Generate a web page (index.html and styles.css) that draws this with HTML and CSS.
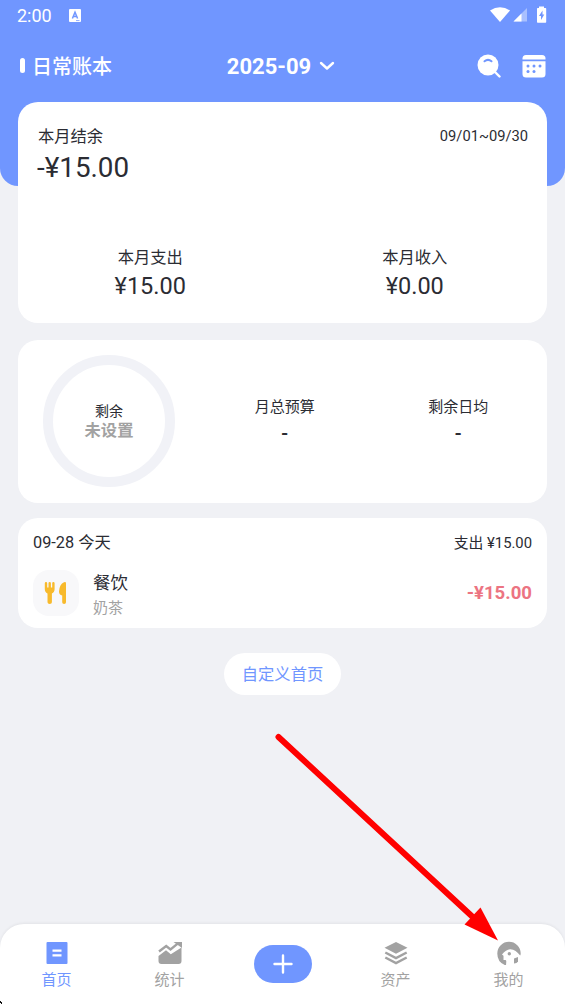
FILE: index.html
```html
<!DOCTYPE html>
<html lang="zh-CN">
<head>
<meta charset="utf-8">
<title>日常账本</title>
<link rel="stylesheet" href="styles.css">
</head>
<body>
<div class="app">
  <header class="hero">
    <div class="status">
      <span class="clock">2:00</span>
      <svg class="status-app" width="12" height="13" viewBox="0 0 12 13"><rect width="12" height="13" rx="1" fill="#fff"/><path d="M3.400 9.500 6 3.300 8.600 9.500M4.300 7.500h3.400" fill="none" stroke="#7096ff" stroke-width="1.500"/><path d="M7 11.600h3.500" stroke="#7096ff" stroke-width=".8"/></svg>
      <svg class="status-icons" width="57" height="18" viewBox="0 0 57 18">
        <path d="M0 4.500Q10 -2 20 4.500L10 16Z" fill="#fff"/>
        <path d="M23.500 15.500 37 2v13.500Z" fill="#fff" opacity=".4"/>
        <path d="M23.500 15.500 31.500 7.500v8Z" fill="#fff"/>
        <path d="M49 .5h5V2h1.500q.7 0 .7.700V16q0 .7-.7.700h-7.800q-.7 0-.7-.7V2.700q0-.7.700-.7H49Z" fill="#fff"/>
        <path d="M52.500 4.500 49 10h2v4l3.300-5.500h-1.800Z" fill="#7096ff"/>
      </svg>
    </div>
    <div class="toolbar">
      <div class="book"><i class="book-mark"></i>日常账本</div>
      <div class="month">2025-09<svg width="16" height="10" viewBox="0 0 16 10"><path d="M2 2l6 5.500 6-5.500" fill="none" stroke="#fff" stroke-width="2.400" stroke-linecap="round" stroke-linejoin="round"/></svg></div>
      <div class="actions">
        <svg width="24" height="24" viewBox="0 0 24 24"><circle cx="11" cy="11" r="10.500" fill="#fff"/><path d="M18.500 18.500l4 4" stroke="#fff" stroke-width="2.400" stroke-linecap="round"/><path d="M7.500 7.300q3.500-2.800 7 0" fill="none" stroke="#7096ff" stroke-width="2" stroke-linecap="round"/></svg>
        <svg width="24" height="24" viewBox="0 0 24 24"><path d="M.5 5.500V4.500Q.5 1 4 1h16q3.500 0 3.500 3.500v1Z" fill="#fff"/><path d="M.5 7.200h23V20q0 3.500-3.500 3.500H4Q.5 23.500.5 20Z" fill="#fff"/><g fill="#7096ff"><circle cx="6" cy="12" r="1.500"/><circle cx="12" cy="12" r="1.500"/><circle cx="18" cy="12" r="1.500"/><circle cx="6" cy="17.500" r="1.500"/><circle cx="12" cy="17.500" r="1.500"/></g></svg>
      </div>
    </div>
  </header>

  <main class="content">
    <section class="card balance">
      <div class="balance-head"><span class="label">本月结余</span><span class="range">09/01~09/30</span></div>
      <div class="balance-total">-¥15.00</div>
      <div class="balance-stats">
        <div class="stat"><span class="label">本月支出</span><span class="stat-value">¥15.00</span></div>
        <div class="stat"><span class="label">本月收入</span><span class="stat-value">¥0.00</span></div>
      </div>
    </section>

    <section class="card budget">
      <div class="ring"><span class="ring-label">剩余</span><span class="ring-value">未设置</span></div>
      <div class="budget-cols">
        <div class="budget-col"><span>月总预算</span><b>-</b></div>
        <div class="budget-col"><span>剩余日均</span><b>-</b></div>
      </div>
    </section>

    <section class="card records">
      <div class="day"><span class="day-date">09-28 今天</span><span class="day-sum">支出 ¥15.00</span></div>
      <div class="record">
        <div class="record-icon">
          <svg width="24" height="24" viewBox="0 0 24 24" fill="#f8ba2c"><path d="M.8 2.200q0-1.200 1.200-1.200t1.200 1.200V6.500h1.300V2.200q0-1.200 1.200-1.200t1.200 1.200v4.300h1.300V2.200Q8.200 1 9.400 1t1.200 1.200V8q0 3.300-2.700 4.400v8.800q0 1.800-2.200 1.800t-2.200-1.800v-8.800Q.8 11.300.8 8Z"/><path d="M22 2.500v18.700q0 1.800-1.900 1.800t-1.900-1.800V14.500Q15 14 15 10.500 15.500 3.300 20 1.300q2-.9 2 1.200Z"/></svg>
        </div>
        <div class="record-text"><span class="record-name">餐饮</span><span class="record-note">奶茶</span></div>
        <span class="record-amount">-¥15.00</span>
      </div>
    </section>

    <button class="customize">自定义首页</button>
  </main>

  <nav class="tabs">
    <div class="tab active"><svg width="24" height="24" viewBox="0 0 24 24"><rect x="1.500" y="1" width="21" height="22" rx="1" fill="#7096ff"/><path d="M7.500 9.700h9M7.500 14.300h9" stroke="#fff" stroke-width="2.200"/></svg><span>首页</span></div>
    <div class="tab"><svg width="24" height="24" viewBox="0 0 24 24"><path d="M1 10.500 8.200 5l4.300 3.500L20 2.300" fill="none" stroke="#a2a2a2" stroke-width="2.400"/><path d="M15.500 1H24v6Z" fill="#a2a2a2"/><path d="M.5 15 8 9.300l4.800 4L23.500 6.500V20q0 3-3 3h-17q-3 0-3-3Z" fill="#a2a2a2"/></svg><span>统计</span></div>
    <div class="tab"><div class="add"><svg width="20" height="20" viewBox="0 0 20 20"><path d="M10 1.500v17M1.500 10h17" stroke="#fff" stroke-width="2.400" stroke-linecap="round"/></svg></div></div>
    <div class="tab"><svg width="24" height="24" viewBox="0 0 24 24"><path d="M12 1 23.500 6.800 12 12.800.5 6.800Z" fill="#a2a2a2"/><path d="M1.300 11.500 12 17l10.700-5.500M1.300 16.500 12 22l10.700-5.500" fill="none" stroke="#a2a2a2" stroke-width="2.500"/></svg><span>资产</span></div>
    <div class="tab"><svg width="24" height="24" viewBox="0 0 24 24"><path d="M9 24.500Q.3 21.500.3 12.500A11.700 11.700 0 0 1 23.700 12.500Q23.700 13.500 23.200 14.500C20 10.500 17 8 13 8.200Q9 8.500 5 13.500L6.500 14.800V19H8.500Q9.300 19 9.300 20.500Z" fill="#a2a2a2"/><circle cx="12.300" cy="12.800" r="1.700" fill="#a2a2a2"/><path d="M17 17.500 21 16v4.500q-1 2-4 2Z" fill="#a2a2a2"/></svg><span>我的</span></div>
  </nav>

  <svg class="pointer" width="565" height="1004" viewBox="0 0 565 1004"><path d="M278.500 737 476 920" stroke="#f00" stroke-width="6" stroke-linecap="round"/><path d="M498 940.500 464.500 924.500 480.500 907.500Z" fill="#f00"/><path d="M0 1001h1v1h1v2H1v-1H0Z" fill="#111"/></svg>
</div>
</body>
</html>
```
FILE: styles.css
```css
* { box-sizing: border-box; }
body {
  margin: 0;
  background: #f0f1f5;
  color: #2b2c33;
  font-family: Roboto, "Noto Sans CJK SC", sans-serif;
}
svg { display: block; flex: none; }
.app {
  position: relative;
  display: flex;
  flex-direction: column;
  height: 1004px;
  overflow: hidden;
}

.hero {
  flex: none;
  height: 186px;
  background: #7096ff;
  border-radius: 0 0 18px 18px;
  color: #fff;
}
.status {
  display: flex;
  align-items: center;
  height: 32px;
  padding: 0 18px 0 17px;
}
.clock { width: 52px; font-size: 18px; line-height: 32px; }
.status-app { margin-top: -1px; }
.status-icons { margin-left: auto; margin-top: -2px; }
.toolbar {
  display: grid;
  grid-template-columns: 1fr auto 1fr;
  align-items: center;
  height: 68px;
  padding: 0 19px 0 20px;
}
.book {
  display: flex;
  align-items: center;
  gap: 7px;
  padding-top: 1px;
  font-size: 20px;
  font-weight: 500;
  line-height: 30px;
}
.book-mark { width: 5px; height: 15px; margin-top: -2px; border-radius: 3px; background: #fff; }
.month {
  display: flex;
  align-items: center;
  gap: 8px;
  padding: 2px 4px 0 0;
  font-size: 22px;
  font-weight: 700;
  line-height: 30px;
}
.month svg { margin-top: -2px; }
.actions { display: flex; justify-content: flex-end; gap: 21px; margin-top: -1px; }

.content {
  display: flex;
  flex-direction: column;
  flex: 1;
  margin-top: -84px;
  padding: 0 18px;
}
.card { border-radius: 20px; background: #fff; }
.label { font-size: 16.3px; line-height: 24px; }

.balance { height: 221px; margin-bottom: 17px; padding-top: 23px; }
.balance-head {
  display: flex;
  justify-content: space-between;
  align-items: center;
  padding: 0 19px 0 20px;
}
.range { margin-top: -2px; font-size: 14.7px; line-height: 24px; }
.balance-total { padding-left: 19px; font-size: 27.8px; line-height: 38px; }
.balance-stats { display: flex; margin-top: 59px; }
.stat { display: flex; flex: 1; flex-direction: column; align-items: center; }
.stat-value { font-size: 23.5px; line-height: 32px; }

.budget {
  display: flex;
  align-items: center;
  height: 163px;
  margin-bottom: 15px;
  padding: 0 2px 1px 25px;
}
.ring {
  display: flex;
  flex-direction: column;
  align-items: center;
  justify-content: center;
  width: 132px;
  height: 132px;
  border: 10px solid #f1f2f7;
  border-radius: 50%;
}
.ring-label { font-size: 14px; line-height: 20px; }
.ring-value { color: #a2a2a2; font-size: 16.3px; font-weight: 700; line-height: 20px; }
.budget-cols { display: flex; flex: 1; margin: -2px 0 0 23px; }
.budget-col { display: flex; flex: 1; flex-direction: column; align-items: center; font-size: 15px; line-height: 26px; }
.budget-col b { font-size: 20px; font-weight: 500; }

.records { height: 110px; margin-bottom: 25px; padding: 13px 15px 0; }
.day { display: flex; justify-content: space-between; align-items: center; line-height: 24px; }
.day-date { font-size: 16.3px; }
.day-sum { margin-top: -1px; font-size: 14.8px; }
.record { display: flex; align-items: center; height: 46px; margin-top: 15px; }
.record-icon {
  display: flex;
  align-items: center;
  justify-content: center;
  width: 46px;
  height: 46px;
  border-radius: 16px;
  background: #f8f8fa;
}
.record-text { display: flex; flex-direction: column; margin-left: 14px; padding-top: 4px; }
.record-name { font-size: 17.5px; line-height: 26px; }
.record-note { color: #a2a2a2; font-size: 15px; line-height: 24px; }
.record-amount { margin-left: auto; color: #ec7482; font-size: 18.6px; font-weight: 700; }

.customize {
  align-self: center;
  width: 117px;
  height: 42px;
  padding: 2px 0 0;
  border: 0;
  border-radius: 21px;
  background: #fff;
  color: #7096ff;
  font: 16.3px/40px Roboto, "Noto Sans CJK SC", sans-serif;
}

.tabs {
  display: flex;
  flex: none;
  height: 80px;
  border-radius: 24px 24px 0 0;
  background: #fff;
  box-shadow: 0 -1px 3px rgba(0, 0, 0, .06);
}
.tab {
  display: flex;
  flex: 1;
  flex-direction: column;
  align-items: center;
  padding-top: 17px;
  color: #a2a2a2;
  font-size: 15px;
  line-height: 24px;
}
.tab span { margin-top: 3px; }
.tab.active { color: #7096ff; }
.add {
  display: flex;
  align-items: center;
  justify-content: center;
  width: 58px;
  height: 38px;
  margin-top: 4px;
  border-radius: 19px;
  background: #7096ff;
}
.pointer { position: absolute; inset: 0; pointer-events: none; }
```
